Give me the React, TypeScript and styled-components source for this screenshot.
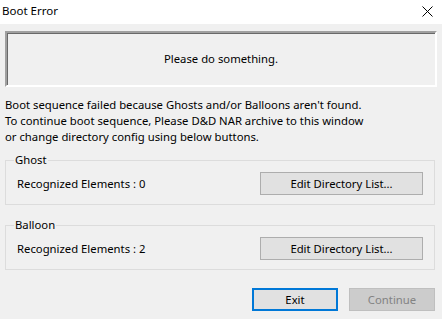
import React from 'react';
import styled, { createGlobalStyle } from 'styled-components';

const GlobalStyle = createGlobalStyle`
  html, body {
    margin: 0;
    padding: 0;
    background: #f0f0f0;
  }
  body {
    font-family: "Noto Sans", "Open Sans", sans-serif;
    font-size: 11.3px;
    color: #000;
  }
`;

const Window = styled.div`
  width: 442px;
  height: 319px;
  background: #f0f0f0;
  display: flex;
  flex-direction: column;
  overflow: hidden;
`;

const TitleBar = styled.div`
  height: 24px;
  background: #fff;
  display: flex;
  align-items: center;
  justify-content: space-between;
  padding-left: 2px;
  flex-shrink: 0;
`;

const TitleText = styled.span`
  font-size: 11.5px;
  line-height: 16px;
  margin-top: -2px;
`;

const CloseBox = styled.div`
  width: 30px;
  height: 24px;
  display: flex;
  align-items: center;
  justify-content: center;
  margin-top: -2px;
`;

const Body = styled.div`
  display: flex;
  flex-direction: column;
  padding: 7px 5px 0 5px;
`;

const StatusBox = styled.div`
  height: 56px;
  box-sizing: border-box;
  border-style: solid;
  border-width: 2px;
  border-color: #a0a0a0 #fff #fff #a0a0a0;
  box-shadow: inset 1px 1px 0 #696969;
  display: flex;
  align-items: center;
  justify-content: center;
  padding-bottom: 2px;
`;

const Message = styled.p`
  margin: 10px 0 7px 0;
  line-height: 16px;
`;

const Group = styled.fieldset<{ $gap: number }>`
  margin: ${(p) => p.$gap}px 2px 0 0;
  padding: 4px 11px 9px 11px;
  border: 1px solid #dcdcdc;
  min-width: 0;
`;

const Legend = styled.legend`
  margin-left: -3px;
  padding: 0 1px;
  line-height: 16px;
`;

const Row = styled.div`
  display: flex;
  align-items: center;
  justify-content: space-between;
`;

const Label = styled.span`
  line-height: 16px;
`;

const Button = styled.button<{ $focused?: boolean }>`
  font-family: inherit;
  font-size: 11.3px;
  color: #000;
  height: 23px;
  box-sizing: border-box;
  background: #e1e1e1;
  border: ${(p) => (p.$focused ? '2px solid #0078d7' : '1px solid #adadad')};
  padding: 0;
  margin: 0;
  line-height: 16px;

  &:disabled {
    background: #cccccc;
    border-color: #bfbfbf;
    color: #838383;
  }
`;

const EditButton = styled(Button)`
  width: 163px;
`;

const Footer = styled.div`
  display: flex;
  justify-content: flex-end;
  gap: 11px;
  margin: 18px 2px 0 0;
`;

const DialogButton = styled(Button)`
  width: 86px;
`;

interface GroupProps {
  title: string;
  count: number;
  gap: number;
}

const ElementGroup: React.FC<GroupProps> = ({ title, count, gap }) => (
  <Group $gap={gap}>
    <Legend>{title}</Legend>
    <Row>
      <Label>Recognized Elements : {count}</Label>
      <EditButton type="button">Edit Directory List...</EditButton>
    </Row>
  </Group>
);

const App: React.FC = () => (
  <Window>
    <GlobalStyle />
    <TitleBar>
      <TitleText>Boot Error</TitleText>
      <CloseBox>
        <svg width="11" height="11" viewBox="0 0 11 11">
          <path d="M0.5 0.5 L10.5 10.5 M10.5 0.5 L0.5 10.5" stroke="#000" strokeWidth="1" fill="none" />
        </svg>
      </CloseBox>
    </TitleBar>
    <Body>
      <StatusBox>Please do something.</StatusBox>
      <Message>
        Boot sequence failed because Ghosts and/or Balloons aren't found.
        <br />
        To continue boot sequence, Please D&amp;D NAR archive to this window
        <br />
        or change directory config using below buttons.
      </Message>
      <ElementGroup title="Ghost" count={0} gap={0} />
      <ElementGroup title="Balloon" count={2} gap={12} />
      <Footer>
        <DialogButton type="button" $focused>
          Exit
        </DialogButton>
        <DialogButton type="button" disabled>
          Continue
        </DialogButton>
      </Footer>
    </Body>
  </Window>
);

export default App;
